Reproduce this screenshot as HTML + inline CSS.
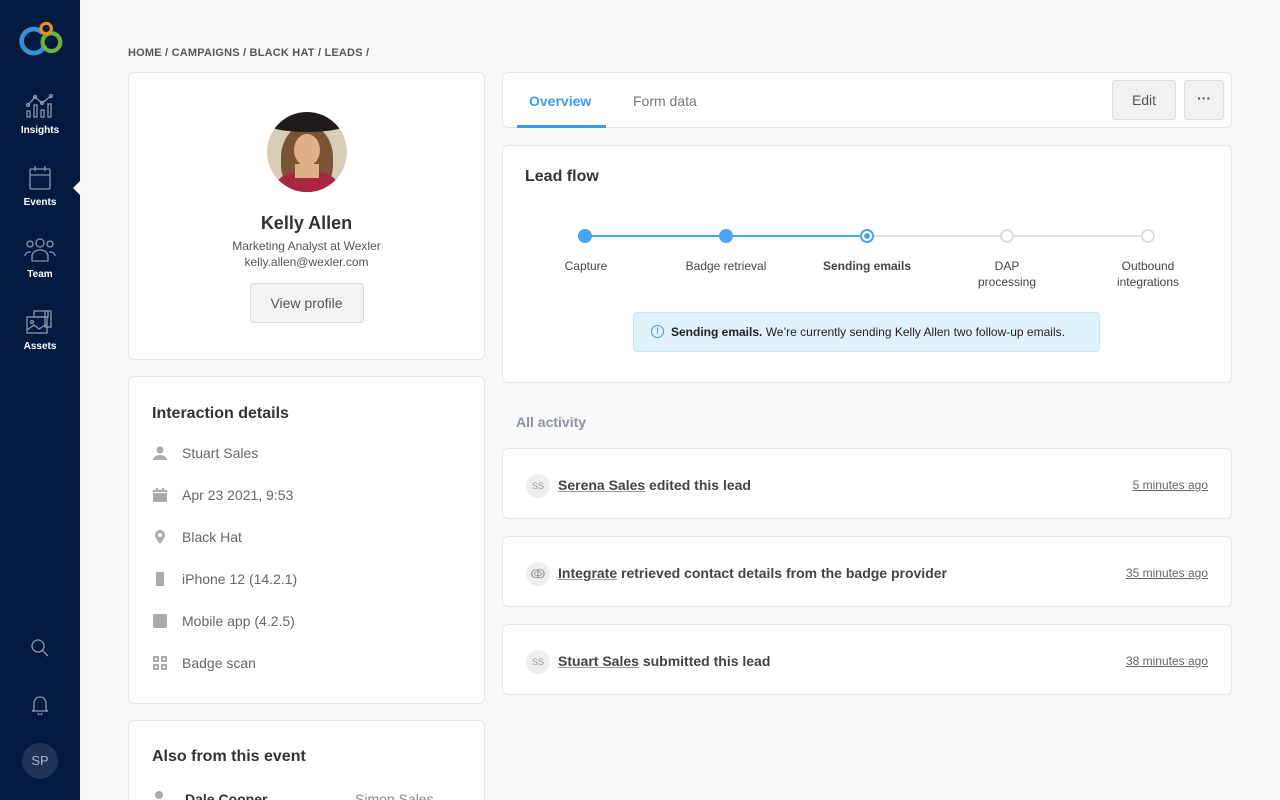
<!DOCTYPE html>
<html style="overflow:hidden;width:1280px;height:800px"><head><meta charset="utf-8"><style>
*{box-sizing:border-box;margin:0;padding:0}
body{width:1280px;height:800px;overflow:hidden;background:#f9f9f9;font-family:"Liberation Sans",sans-serif;color:#333;position:relative}
.side{position:absolute;left:0;top:0;width:80px;height:800px;background:#011a3e}
.nav{position:absolute;left:0;width:80px;text-align:center;color:#fff;font-size:10px;font-weight:bold}
.nav svg{display:block;margin:0 auto 6px}
.card{position:absolute;background:#fff;border:1px solid #e8e8e8;border-radius:6px}
.crumb{position:absolute;left:128px;top:47px;font-size:11px;font-weight:bold;color:#555;letter-spacing:.2px}
h3{font-size:16px;font-weight:bold;color:#333}
.row{position:absolute;left:24px;font-size:14px;color:#666;display:flex;align-items:center}
.row i{display:inline-block;width:14px;height:14px;background:#aaa;margin-right:15px;border-radius:2px}
.act{position:absolute;left:502px;width:730px;height:71px;background:#fff;border:1px solid #e8e8e8;border-radius:6px}
.act .av{position:absolute;left:23px;top:25px;width:24px;height:24px;border-radius:50%;background:#eee;color:#999;font-size:9px;text-align:center;line-height:24px}
.act .t{position:absolute;left:55px;top:28px;font-size:14px;font-weight:bold;color:#444}
.act .t u{text-decoration-color:#999}
.act .tm{position:absolute;right:23px;top:29px;font-size:12px;color:#666;text-decoration:underline}
.step{position:absolute;top:258px;width:140px;text-align:center;font-size:12px;color:#444;line-height:16px}
.dot{position:absolute;top:229px;width:14px;height:14px;border-radius:50%}
</style></head><body>
<div class="side">
 <svg style="position:absolute;left:19px;top:20px" width="46" height="38" viewBox="0 0 44 36"><circle cx="14" cy="20" r="11.5" fill="none" stroke="#3a8fd6" stroke-width="4.5" stroke-dasharray="60 12" transform="rotate(20 14 20)"/><circle cx="31" cy="21" r="8.5" fill="none" stroke="#6ab43e" stroke-width="4"/><circle cx="26" cy="8" r="5" fill="none" stroke="#f08a1c" stroke-width="3"/></svg>
 <div class="nav" style="top:93px"><svg width="30" height="26" viewBox="0 0 30 26" fill="none" stroke="#8a98b0" stroke-width="1.3"><polyline points="3,12 10,4 17,10 26,3"/><circle cx="3" cy="12" r="1.5"/><circle cx="10" cy="4" r="1.5"/><circle cx="17" cy="10" r="1.5"/><circle cx="26" cy="3" r="1.5"/><rect x="2" y="18" width="3" height="6"/><rect x="9" y="12" width="3" height="12"/><rect x="16" y="17" width="3" height="7"/><rect x="23" y="11" width="3" height="13"/></svg>Insights</div>
 <div class="nav" style="top:165px"><svg width="26" height="26" viewBox="0 0 26 26" fill="none" stroke="#8a98b0" stroke-width="1.3"><rect x="3" y="4" width="20" height="20" rx="1"/><line x1="3" y1="10" x2="23" y2="10"/><line x1="8" y1="1" x2="8" y2="6"/><line x1="18" y1="1" x2="18" y2="6"/></svg>Events</div>
 <div style="position:absolute;left:73px;top:181px;width:0;height:0;border-top:7px solid transparent;border-bottom:7px solid transparent;border-right:7px solid #f9f9f9"></div>
 <div class="nav" style="top:237px"><svg width="32" height="26" viewBox="0 0 32 26" fill="none" stroke="#8a98b0" stroke-width="1.3"><circle cx="16" cy="6" r="4"/><circle cx="6" cy="7" r="3"/><circle cx="26" cy="7" r="3"/><path d="M8 24v-5a8 6 0 0 1 16 0v5z"/><path d="M1 19a5 4 0 0 1 6-4M31 19a5 4 0 0 0-6-4"/></svg>Team</div>
 <div class="nav" style="top:309px"><svg width="30" height="26" viewBox="0 0 30 26" fill="none" stroke="#8a98b0" stroke-width="1.3"><rect x="9" y="2" width="14" height="6"/><rect x="20" y="2" width="6" height="16"/><rect x="2" y="8" width="20" height="16"/><circle cx="7" cy="13" r="1.5"/><polyline points="2,21 9,16 14,20 22,15"/></svg>Assets</div>
 <svg style="position:absolute;left:30px;top:638px" width="20" height="20" viewBox="0 0 20 20" fill="none" stroke="#8a98b0" stroke-width="1.3"><circle cx="8" cy="8" r="6"/><line x1="12.5" y1="12.5" x2="18" y2="18"/></svg>
 <svg style="position:absolute;left:31px;top:695px" width="18" height="20" viewBox="0 0 18 20" fill="none" stroke="#8a98b0" stroke-width="1.3"><path d="M3 15V8a6 6 0 0 1 12 0v7l2 1H1z"/><path d="M7 18a2 2 0 0 0 4 0"/></svg>
 <div style="position:absolute;left:22px;top:743px;width:36px;height:36px;border-radius:50%;background:#1e3355;color:#aab4c6;font-size:13px;text-align:center;line-height:36px">SP</div>
</div>

<div class="crumb">HOME / CAMPAIGNS / BLACK HAT / LEADS /</div>

<div class="card" style="left:128px;top:72px;width:357px;height:288px;text-align:center">
 <div style="margin:39px auto 0;width:80px;height:80px;border-radius:50%;background:#d9cdb8;overflow:hidden;position:relative">
  <div style="position:absolute;left:14px;top:14px;width:52px;height:70px;border-radius:45%;background:#7a5434"></div>
  <div style="position:absolute;left:10px;top:60px;width:60px;height:30px;border-radius:40%;background:#a8263f"></div>
  <div style="position:absolute;left:27px;top:22px;width:26px;height:32px;border-radius:50%;background:#e0b08a"></div>
  <div style="position:absolute;left:28px;top:52px;width:24px;height:14px;background:#e0b08a"></div>
  <div style="position:absolute;left:0;top:4px;width:80px;height:16px;border-radius:50%;background:#1e1b1a"></div>
  <div style="position:absolute;left:20px;top:-4px;width:40px;height:18px;border-radius:40%;background:#1e1b1a"></div>
 </div>
 <div style="margin-top:21px;font-size:18px;font-weight:bold;color:#333">Kelly Allen</div>
 <div style="margin-top:5px;font-size:12px;color:#555">Marketing Analyst at Wexler</div>
 <div style="margin-top:2px;font-size:12px;color:#555">kelly.allen@wexler.com</div>
 <div style="margin:14px auto 0;width:114px;height:40px;border:1px solid #ddd;background:#f3f3f3;border-radius:3px;font-size:14px;color:#555;line-height:38px">View profile</div>
</div>

<div class="card" style="left:128px;top:376px;width:357px;height:328px">
 <h3 style="position:absolute;left:23px;top:28px;font-size:16px">Interaction details</h3>
 <div class="row" style="top:68px"><svg width="14" height="14" style="margin-right:15px"><circle cx="7" cy="4" r="3.5" fill="#aaa"/><path d="M0 14a7 5 0 0 1 14 0z" fill="#aaa"/></svg>Stuart Sales</div>
 <div class="row" style="top:110px"><svg width="14" height="14" style="margin-right:15px"><rect x="0" y="2" width="14" height="12" fill="#aaa"/><rect x="3" y="0" width="2" height="3" fill="#aaa"/><rect x="9" y="0" width="2" height="3" fill="#aaa"/><rect x="0" y="4" width="14" height="1" fill="#fff"/></svg>Apr 23 2021, 9:53</div>
 <div class="row" style="top:152px"><svg width="14" height="14" style="margin-right:15px"><path d="M7 14C3 9 2 7 2 5a5 5 0 0 1 10 0c0 2-1 4-5 9z" fill="#aaa"/><circle cx="7" cy="5" r="2" fill="#fff"/></svg>Black Hat</div>
 <div class="row" style="top:194px"><svg width="14" height="14" style="margin-right:15px"><rect x="3" y="0" width="8" height="14" rx="1" fill="#aaa"/></svg>iPhone 12 (14.2.1)</div>
 <div class="row" style="top:236px"><i></i>Mobile app (4.2.5)</div>
 <div class="row" style="top:278px"><svg width="14" height="14" style="margin-right:15px" fill="none" stroke="#aaa" stroke-width="2"><rect x="1" y="1" width="4" height="4"/><rect x="9" y="1" width="4" height="4"/><rect x="1" y="9" width="4" height="4"/><rect x="9" y="9" width="4" height="4"/></svg>Badge scan</div>
</div>

<div class="card" style="left:128px;top:720px;width:357px;height:100px">
 <h3 style="position:absolute;left:23px;top:27px">Also from this event</h3>
 <div style="position:absolute;left:26px;top:70px;width:8px;height:8px;border-radius:50%;background:#aaa"></div>
 <div style="position:absolute;left:56px;top:70px;font-size:14px;font-weight:bold">Dale Cooper</div>
 <div style="position:absolute;left:226px;top:70px;font-size:14px;color:#888">Simon Sales</div>
</div>

<div class="card" style="left:502px;top:72px;width:730px;height:56px">
 <div style="position:absolute;left:26px;top:20px;font-size:14px;font-weight:bold;color:#3a9bf0">Overview</div>
 <div style="position:absolute;left:14px;top:52px;width:89px;height:3px;background:#3a9bf0"></div>
 <div style="position:absolute;left:130px;top:20px;font-size:14px;color:#777">Form data</div>
 <div style="position:absolute;left:609px;top:7px;width:64px;height:40px;border:1px solid #ddd;background:#f1f1f1;border-radius:3px;font-size:14px;color:#555;text-align:center;line-height:38px">Edit</div>
 <div style="position:absolute;left:681px;top:7px;width:40px;height:40px;border:1px solid #ddd;background:#f1f1f1;border-radius:3px;font-size:14px;color:#555;text-align:center;line-height:34px;font-weight:bold">···</div>
</div>

<div class="card" style="left:502px;top:145px;width:730px;height:238px">
 <h3 style="position:absolute;left:22px;top:22px">Lead flow</h3>
</div>
<div style="position:absolute;left:585px;top:235px;width:282px;height:2px;background:#4aa3f5"></div>
<div style="position:absolute;left:867px;top:235px;width:281px;height:2px;background:#e2e2e2"></div>
<div class="dot" style="left:578px;background:#4aa3f5"></div>
<div class="dot" style="left:719px;background:#4aa3f5"></div>
<div class="dot" style="left:860px;background:#fff;border:2px solid #4aa3f5"><div style="margin:2px;width:6px;height:6px;border-radius:50%;background:#4aa3f5"></div></div>
<div class="dot" style="left:1000px;background:#fff;border:2px solid #ddd"></div>
<div class="dot" style="left:1141px;background:#fff;border:2px solid #ddd"></div>
<div class="step" style="left:516px">Capture</div>
<div class="step" style="left:656px">Badge retrieval</div>
<div class="step" style="left:797px;font-weight:bold">Sending emails</div>
<div class="step" style="left:937px">DAP<br>processing</div>
<div class="step" style="left:1078px">Outbound<br>integrations</div>
<div style="position:absolute;left:633px;top:312px;width:467px;height:40px;background:#e0f3fc;border:1px solid #c4e6f6;border-radius:4px;font-size:12px;color:#222;line-height:38px;padding-left:37px">
 <span style="position:absolute;left:17px;top:12px;width:13px;height:13px;border:1.3px solid #3a9bf0;border-radius:50%;color:#3a9bf0;font-size:9px;line-height:11px;text-align:center;font-weight:bold">!</span><b>Sending emails.</b> We’re currently sending Kelly Allen two follow-up emails.</div>

<div style="position:absolute;left:516px;top:414px;font-size:14px;font-weight:bold;color:#8a94a2">All activity</div>
<div class="act" style="top:448px"><div class="av">SS</div><div class="t"><u>Serena Sales</u> edited this lead</div><div class="tm">5 minutes ago</div></div>
<div class="act" style="top:536px"><div class="av" style="font-size:12px">ↂ</div><div class="t"><u>Integrate</u> retrieved contact details from the badge provider</div><div class="tm">35 minutes ago</div></div>
<div class="act" style="top:624px"><div class="av">SS</div><div class="t"><u>Stuart Sales</u> submitted this lead</div><div class="tm">38 minutes ago</div></div>
</body></html>
